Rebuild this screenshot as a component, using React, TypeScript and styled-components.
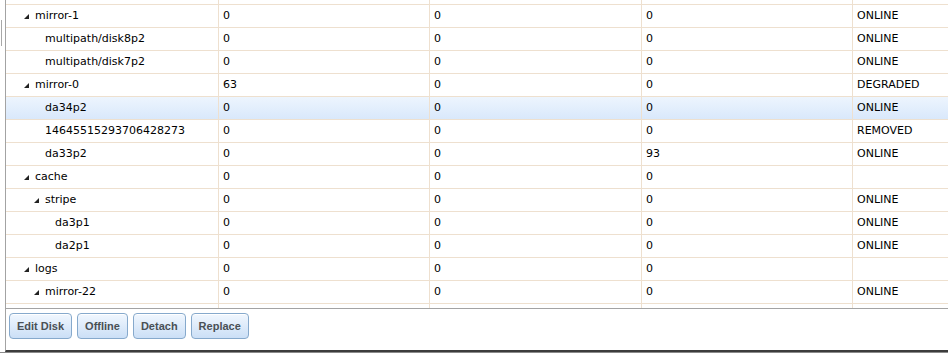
import React from 'react'
import styled, { createGlobalStyle } from 'styled-components'

const colors = {
  line: '#eee0cf',
  frame: '#a3a3a3',
  text: '#000000',
  selTop: '#edf5fe',
  selBottom: '#d9e8fb',
  btnBorder: '#86a9cc',
  btnText: '#4a5055'
};

const GlobalStyle = createGlobalStyle`
  html, body {
    margin: 0;
    padding: 0;
    background: #ffffff;
  }
  body {
    font-family: "DejaVu Sans", Verdana, sans-serif;
  }
`;

const Page = styled.div`
  display: flex;
  width: 948px;
  height: 353px;
  overflow: hidden;
  box-sizing: border-box;
  border-bottom: 1px solid #8a8a8a;
`;

const Splitter = styled.div`
  width: 5px;
  flex: none;
  padding-top: 20px;
  box-sizing: border-box;
`;

const Grip = styled.div`
  width: 1px;
  height: 26px;
  margin-left: 1px;
  background: #a8a8a8;
`;

const Panel = styled.section`
  flex: 1;
  display: flex;
  flex-direction: column;
  border-left: 1px solid ${colors.frame};
  border-bottom: 2px solid #3c3c3c;
  height: 352px;
  box-sizing: border-box;
`;

const GridView = styled.div`
  height: 309px;
  flex: none;
  overflow: hidden;
  border-bottom: 1px solid ${colors.frame};
  box-sizing: border-box;
`;

// the view is scrolled a little: only the bottom edge of the first row shows
const Rows = styled.div`
  margin-top: -18px;
`;

const Row = styled.div<{ $selected?: boolean }>`
  display: grid;
  grid-template-columns: 213px 211px 212px 211px 1fr;
  height: 23px;
  box-sizing: border-box;
  border-bottom: 1px solid ${colors.line};
  background: ${p =>
    p.$selected
      ? `linear-gradient(to bottom, ${colors.selTop}, ${colors.selBottom})`
      : '#ffffff'};
`;

const Cell = styled.div`
  display: flex;
  align-items: center;
  padding: 0 0 2px 4px;
  border-right: 1px solid ${colors.line};
  font-size: 11px;
  color: ${colors.text};
  white-space: nowrap;
  overflow: hidden;
  &:last-child {
    border-right: none;
  }
`;

const NameCell = styled(Cell)<{ $level: number }>`
  padding-left: ${p => 18 + p.$level * 10}px;
`;

const Expander = styled.span`
  display: inline-flex;
  width: 11px;
  flex: none;
  align-items: center;
  padding-top: 2px;
  svg {
    display: block;
  }
`;

const Toolbar = styled.div`
  flex: 1;
  display: flex;
  align-items: flex-start;
  gap: 5px;
  padding: 4px 0 0 3px;
  background: #ffffff;
`;

const Button = styled.button`
  height: 26px;
  padding: 0 7px;
  border: 1px solid ${colors.btnBorder};
  border-radius: 4px;
  background: linear-gradient(to bottom, #f1f7fe 0%, #deebfa 50%, #cbdff6 100%);
  box-shadow: inset 0 1px 0 #ffffff;
  font-family: "Liberation Sans", Arial, sans-serif;
  font-weight: bold;
  font-size: 11px;
  color: ${colors.btnText};
  cursor: pointer;
`;

interface IDiskRow {
  name: string
  level: number
  expanded?: boolean
  read: string
  write: string
  checksum: string
  status: string
  selected?: boolean
}

const blank: IDiskRow = { name: '', level: 0, read: '', write: '', checksum: '', status: '' };

const rows: IDiskRow[] = [
  blank,
  { name: 'mirror-1', level: 0, expanded: true, read: '0', write: '0', checksum: '0', status: 'ONLINE' },
  { name: 'multipath/disk8p2', level: 1, read: '0', write: '0', checksum: '0', status: 'ONLINE' },
  { name: 'multipath/disk7p2', level: 1, read: '0', write: '0', checksum: '0', status: 'ONLINE' },
  { name: 'mirror-0', level: 0, expanded: true, read: '63', write: '0', checksum: '0', status: 'DEGRADED' },
  { name: 'da34p2', level: 1, read: '0', write: '0', checksum: '0', status: 'ONLINE', selected: true },
  { name: '14645515293706428273', level: 1, read: '0', write: '0', checksum: '0', status: 'REMOVED' },
  { name: 'da33p2', level: 1, read: '0', write: '0', checksum: '93', status: 'ONLINE' },
  { name: 'cache', level: 0, expanded: true, read: '0', write: '0', checksum: '0', status: '' },
  { name: 'stripe', level: 1, expanded: true, read: '0', write: '0', checksum: '0', status: 'ONLINE' },
  { name: 'da3p1', level: 2, read: '0', write: '0', checksum: '0', status: 'ONLINE' },
  { name: 'da2p1', level: 2, read: '0', write: '0', checksum: '0', status: 'ONLINE' },
  { name: 'logs', level: 0, expanded: true, read: '0', write: '0', checksum: '0', status: '' },
  { name: 'mirror-22', level: 1, expanded: true, read: '0', write: '0', checksum: '0', status: 'ONLINE' },
  blank
];

const ExpandedArrow = () => (
  <svg width="5" height="5" viewBox="0 0 5 5">
    <polygon points="5,0 5,5 0,5" fill="#222" />
  </svg>
);

const App: React.FC = () => {
  return (
    <>
      <GlobalStyle />
      <Page>
        <Splitter>
          <Grip />
        </Splitter>
        <Panel>
          <GridView>
            <Rows>
              {rows.map((r, i) => (
                <Row key={i} $selected={r.selected}>
                  <NameCell $level={r.level}>
                    <Expander>{r.expanded && <ExpandedArrow />}</Expander>
                    {r.name}
                  </NameCell>
                  <Cell>{r.read}</Cell>
                  <Cell>{r.write}</Cell>
                  <Cell>{r.checksum}</Cell>
                  <Cell>{r.status}</Cell>
                </Row>
              ))}
            </Rows>
          </GridView>
          <Toolbar>
            <Button>Edit Disk</Button>
            <Button>Offline</Button>
            <Button>Detach</Button>
            <Button>Replace</Button>
          </Toolbar>
        </Panel>
      </Page>
    </>
  )
};

export default App
